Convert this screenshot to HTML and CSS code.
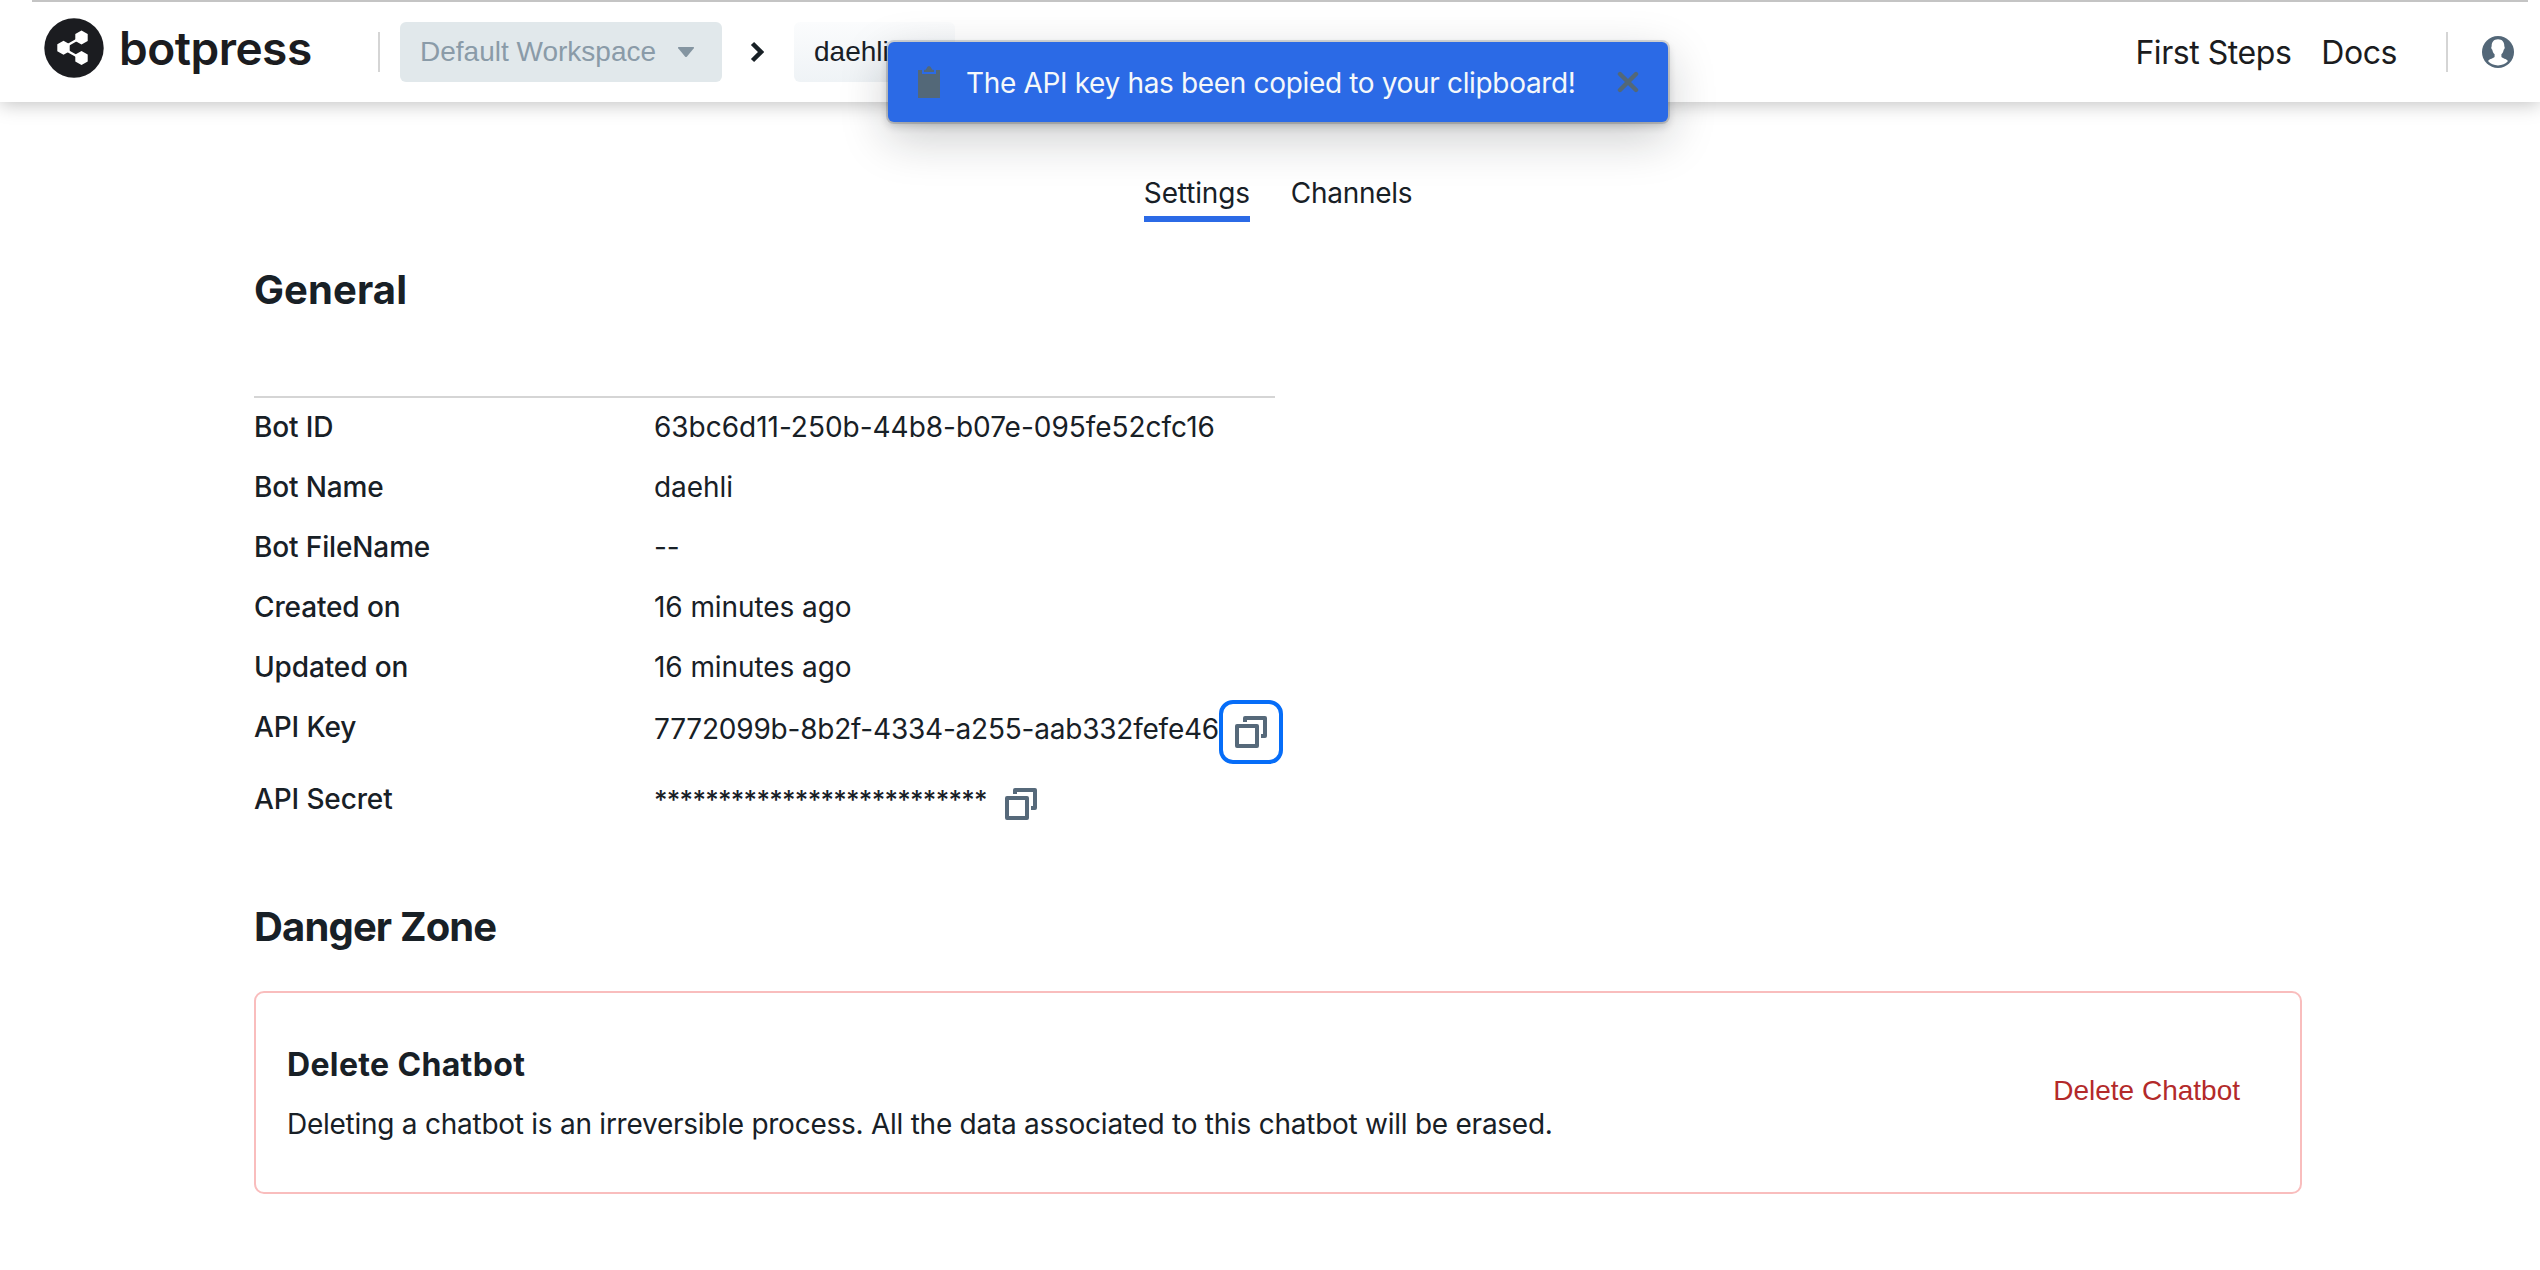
FILE: index.html
```html
<!DOCTYPE html>
<html lang="en">
<head>
<meta charset="utf-8">
<title>Botpress</title>
<link rel="stylesheet" href="styles.css">
</head>
<body>
<header class="topbar">
  <a class="brand">
    <svg class="brand-mark" viewBox="0 0 60 60">
      <circle cx="30" cy="30" r="29.7" fill="#1b1c20"/>
      <path d="M19.500 29.500L37 19.500M21 31.500L37 40.500" stroke="#fff" stroke-width="2.400"/>
      <path fill="#fff" d="M19.500 22.800l6.200 3.500v7l-6.200 3.500-6.200-3.500v-7zM37.500 12.500l6.200 3.500v7l-6.200 3.500-6.200-3.500v-7zM37.500 33l6.200 3.500v7l-6.200 3.500-6.200-3.500v-7z"/>
    </svg>
    <span class="brand-name">botpress</span>
  </a>
  <i class="divider"></i>
  <button class="crumb workspace">Default Workspace
    <svg class="caret" viewBox="0 0 18 12"><path d="M1.500 1h15q1 .4.300 1.300L10 10.500q-1 1-2 0L1.200 2.300Q.5 1.400 1.500 1z"/></svg>
  </button>
  <svg class="chevron" viewBox="0 0 14 22"><path d="M2.500 2.500L11 11L2.500 19.500"/></svg>
  <button class="crumb bot">daehli</button>
  <nav class="links"><a>First Steps</a><a>Docs</a></nav>
  <i class="divider"></i>
  <svg class="user" viewBox="0 0 32 32">
    <circle cx="16" cy="16" r="16" fill="#536778"/>
    <path fill="#fff" d="M16 3.200c4.200 0 6.500 2.800 6.300 7 .7.500.6 2.700-.6 3.600-.4 2-1.200 3.500-2.300 4.500v2.500c1.200 1.900 4.800 1.800 6.600 4.200-2.500 2.900-6 4.400-10 4.400s-7.500-1.500-10-4.400c1.800-2.400 5.400-2.300 6.600-4.200v-2.500c-1.100-1-1.900-2.500-2.300-4.500-1.200-.9-1.300-3.100-.6-3.600-.2-4.200 2.100-7 6.300-7z"/>
  </svg>
</header>

<div class="toast">
  <svg class="clip" viewBox="0 0 22 32"><path d="M0 4h4v4h14V4h4v28H0zM6 6V4q2 0 2.500-1.500Q9.300 0 11 0t2.500 2.500Q14 4 16 4v2z"/></svg>
  <span class="toast-text">The API key has been copied to your clipboard!</span>
  <svg class="close" viewBox="0 0 22 22"><path d="M3 3L19 19M19 3L3 19"/></svg>
</div>

<main class="page">
  <nav class="tabs"><a class="tab active">Settings</a><a class="tab">Channels</a></nav>
  <h2 class="heading">General</h2>
  <dl class="details">
    <div class="row"><dt>Bot ID</dt><dd class="id">63bc6d11-250b-44b8-b07e-095fe52cfc16</dd></div>
    <div class="row"><dt>Bot Name</dt><dd>daehli</dd></div>
    <div class="row"><dt>Bot FileName</dt><dd>--</dd></div>
    <div class="row"><dt>Created on</dt><dd>16 minutes ago</dd></div>
    <div class="row"><dt>Updated on</dt><dd>16 minutes ago</dd></div>
    <div class="row tall"><dt>API Key</dt><dd class="key">7772099b-8b2f-4334-a255-aab332fefe46</dd>
      <button class="copy focused"><svg viewBox="0 0 32 32"><path d="M2 10h20v20H2zM10 6V2h20v18h-4"/></svg></button></div>
    <div class="row tall"><dt>API Secret</dt><dd class="secret">**************************</dd>
      <button class="copy"><svg viewBox="0 0 32 32"><path d="M2 10h20v20H2zM10 6V2h20v18h-4"/></svg></button></div>
  </dl>
  <h2 class="heading danger-heading">Danger Zone</h2>
  <section class="danger">
    <div>
      <h3 class="danger-title">Delete Chatbot</h3>
      <p class="danger-text">Deleting a chatbot is an irreversible process. All the data associated to this chatbot will be erased.</p>
    </div>
    <button class="delete">Delete Chatbot</button>
  </section>
</main>
</body>
</html>
```

FILE: styles.css
```css
* { box-sizing: border-box; }
body { margin: 0; background: #fff; color: #182026; font: 400 28px/36px Inter, sans-serif; }
button { border: 0; background: none; padding: 0; font: 400 28px/36px "Liberation Sans", Arial, sans-serif; }
svg { display: block; flex: none; }

.topbar { position: relative; display: flex; align-items: center; height: 102px; padding: 2px 26px 0 44px; background: #fff; box-shadow: 0 2px 18px rgba(0,0,0,.25); }
.topbar::before { content: ""; position: absolute; left: 32px; right: 12px; top: 0; height: 2px; background: #c4c4c4; }
.brand { display: flex; align-items: center; width: 334px; color: #1b1c20; }
.brand-mark { width: 60px; height: 60px; margin-top: -9px; }
.brand-name { margin: -8px 0 0 15px; font-size: 46px; line-height: 60px; font-weight: 600; letter-spacing: -.5px; }
.divider { width: 2px; height: 40px; background: #d5d5d5; }
.crumb { display: flex; align-items: center; height: 60px; border-radius: 6px; }
.workspace { width: 322px; margin-left: 20px; padding-left: 20px; background: #e1e8eb; color: #8a9ba8; white-space: nowrap; }
.caret { width: 18px; height: 12px; margin-left: 21px; fill: #8495a1; }
.chevron { width: 14px; height: 22px; margin: 0 30px 0 28px; fill: none; stroke: #182026; stroke-width: 4.500; }
.bot { width: 161px; padding-left: 20px; color: #182026; background: linear-gradient(#fbfcfd, #eff3f6); }
.links { display: flex; gap: 30px; margin: 2px 49px 0 auto; font-size: 32px; line-height: 40px; letter-spacing: -.45px; color: #1b1c20; }
.user { width: 32px; height: 32px; margin-left: 34px; }

.toast { position: absolute; left: 888px; top: 42px; width: 780px; height: 80px; display: flex; align-items: center; padding: 0 29px 0 30px; border-radius: 6px; background: #2b6ae6; color: #f5f8fa; box-shadow: 0 0 0 2px rgba(16,22,26,.15), 0 4px 8px rgba(16,22,26,.2), 0 16px 48px rgba(16,22,26,.22); }
.clip { width: 22px; height: 32px; fill: #536878; }
.toast-text { margin: 2px 0 0 26px; white-space: nowrap; letter-spacing: -.34px; }
.close { width: 22px; height: 22px; margin-left: auto; stroke: #536878; stroke-width: 4.400; stroke-linecap: round; }

.page { padding: 0 238px 0 254px; }
.tabs { display: flex; justify-content: center; gap: 41px; padding-top: 73px; letter-spacing: -.3px; }
.tab { height: 47px; line-height: 36px; border-bottom: 6px solid transparent; }
.active { border-color: #2b6ae6; letter-spacing: -.15px; }
.heading { margin: 44px 0 0; font-size: 40px; line-height: 48px; font-weight: 700; letter-spacing: .1px; }
.details { width: 1021px; margin: 82px 0 0; border-top: 2px solid #d5d5d5; letter-spacing: -.08px; }
.row { display: flex; align-items: flex-start; height: 60px; padding-top: 11px; white-space: nowrap; }
.tall { height: 72px; }
dt { width: 400px; flex: none; font-weight: 500; letter-spacing: -.13px; }
dd { margin: 0; }
.id { letter-spacing: -.02px; }
.key { width: 565px; padding-top: 2px; letter-spacing: -.22px; }
.secret { width: 335px; padding-top: 1px; font-size: 26px; letter-spacing: -.73px; font-weight: 500; }
.copy { flex: none; width: 64px; height: 64px; margin-top: -9px; padding: 16px; }
.copy svg { width: 32px; height: 32px; fill: none; stroke: #56697a; stroke-width: 4; stroke-linejoin: round; }
.focused { border: 4px solid #066df8; border-radius: 14px; padding: 12px; }
.danger-heading { margin-top: 61px; letter-spacing: -.85px; }
.danger { display: flex; align-items: center; justify-content: space-between; height: 203px; margin-top: 40px; padding: 0 60px 0 31px; border: 2px solid #f9bdbd; border-radius: 10px; }
.danger-title { margin: 2px 0 0; font-size: 32px; line-height: 40px; font-weight: 700; letter-spacing: .35px; }
.danger-text { margin: 21px 0 0; white-space: nowrap; letter-spacing: -.255px; }
.delete { margin-top: -4px; color: #b32a2a; white-space: nowrap; }
```
